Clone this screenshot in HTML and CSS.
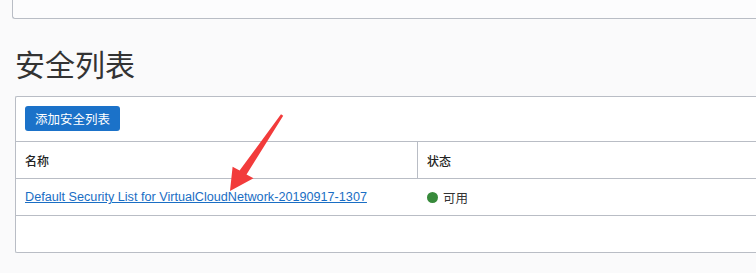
FILE: index.html
```html
<!DOCTYPE html>
<html lang="zh">
<head>
<meta charset="utf-8">
<link rel="stylesheet" href="styles.css">
</head>
<body>
<div class="top-box"></div>
<h1 class="title">安全列表</h1>
<div class="card">
  <div class="toolbar"><button class="btn">添加安全列表</button></div>
  <div class="row head">
    <div class="cell c1">名称</div>
    <div class="cell c2">状态</div>
  </div>
  <div class="row">
    <div class="cell c1 nodiv"><a class="link" href="#">Default Security List for VirtualCloudNetwork-20190917-1307</a></div>
    <div class="cell c2"><span class="dot"></span><span class="st">可用</span></div>
  </div>
  <div class="foot"></div>
</div>
<svg class="arrow" width="756" height="273" viewBox="0 0 756 273">
  <polygon points="281,114.3 283.2,115.7 246.5,174.6 253.5,178.2 230,191 232.6,166.8 239.6,170.4" fill="#f23b3b"/>
</svg>
</body>
</html>
```

FILE: styles.css
```css
html, body {
  margin: 0;
  padding: 0;
  overflow: hidden;
}
body {
  width: 756px;
  height: 273px;
  background: #fafafb;
  font-family: "Liberation Sans", "Noto Sans CJK SC", sans-serif;
  position: relative;
  color: #333;
}
.top-box {
  margin-left: 12px;
  width: 743px;
  height: 18px;
  background: #fcfcfd;
  border-left: 1px solid #b9bdc5;
  border-bottom: 1px solid #b9bdc5;
  border-bottom-left-radius: 3px;
}
.title {
  margin: 24px 0 0 15px;
  font-family: "Noto Sans CJK SC", sans-serif;
  font-weight: 400;
  font-size: 30px;
  line-height: 40px;
  height: 53px;
  color: #333;
}
.card {
  margin-left: 15px;
  width: 740px;
  background: #fff;
  border: 1px solid #b9bdc5;
  border-right: none;
  border-radius: 2px 0 0 2px;
}
.toolbar {
  padding: 9px 9px 10px;
  border-bottom: 1px solid #b9bdc5;
  display: flex;
}
.btn {
  height: 25px;
  width: 95px;
  padding: 0;
  border: none;
  border-radius: 3px;
  background: #1b72c9;
  color: #fff;
  font-family: "Noto Sans CJK SC", sans-serif;
  font-size: 12.5px;
  line-height: 25px;
}
.row {
  display: flex;
  height: 36px;
  border-bottom: 1px solid #b9bdc5;
}
.cell {
  display: flex;
  align-items: center;
  padding-left: 9px;
  font-size: 12px;
}
.c1 {
  width: 392px;
  border-right: 1px solid #b9bdc5;
}
.nodiv {
  border-right-color: transparent;
}
.head .cell {
  font-family: "Noto Sans CJK SC", sans-serif;
  font-weight: 500;
  color: #222;
}
.link {
  color: #1a6ec4;
  text-decoration: underline;
  font-size: 12.65px;
}
.dot {
  width: 11px;
  height: 11px;
  border-radius: 50%;
  background: #378a3b;
  margin-right: 5px;
  margin-top: 1px;
}
.st {
  font-family: "Noto Sans CJK SC", sans-serif;
  font-size: 12.5px;
  color: #333;
}
.foot {
  height: 36px;
}
.arrow {
  position: absolute;
  left: 0;
  top: 0;
  pointer-events: none;
}
```
